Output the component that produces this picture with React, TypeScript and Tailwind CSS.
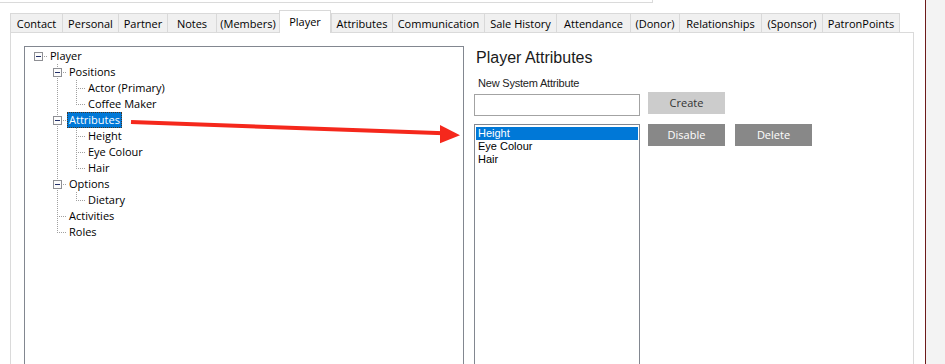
import React from "react";

type Cell = "blank" | "pipe" | "tee" | "elbow" | "root";

type Row = {
  cells: Cell[];
  label: string;
  expander?: boolean;
  selected?: boolean;
};

const tabs = [
  { label: "Contact", w: "w-[52px]" },
  { label: "Personal", w: "w-[56px]" },
  { label: "Partner", w: "w-[49px]" },
  { label: "Notes", w: "w-[49px]" },
  { label: "(Members)", w: "w-[63px]" },
  { label: "Player", w: "w-[52px]", active: true },
  { label: "Attributes", w: "w-[61px]" },
  { label: "Communication", w: "w-[92px]" },
  { label: "Sale History", w: "w-[72px]" },
  { label: "Attendance", w: "w-[74px]" },
  { label: "(Donor)", w: "w-[49px]" },
  { label: "Relationships", w: "w-[82px]" },
  { label: "(Sponsor)", w: "w-[61px]" },
  { label: "PatronPoints", w: "w-[78px]", last: true },
];

const rows: Row[] = [
  { cells: ["root"], label: "Player", expander: true },
  { cells: ["blank", "tee"], label: "Positions", expander: true },
  { cells: ["blank", "pipe", "tee"], label: "Actor (Primary)" },
  { cells: ["blank", "pipe", "elbow"], label: "Coffee Maker" },
  { cells: ["blank", "tee"], label: "Attributes", expander: true, selected: true },
  { cells: ["blank", "pipe", "tee"], label: "Height" },
  { cells: ["blank", "pipe", "tee"], label: "Eye Colour" },
  { cells: ["blank", "pipe", "elbow"], label: "Hair" },
  { cells: ["blank", "tee"], label: "Options", expander: true },
  { cells: ["blank", "pipe", "elbow"], label: "Dietary" },
  { cells: ["blank", "tee"], label: "Activities" },
  { cells: ["blank", "elbow"], label: "Roles" },
];

// one 19x16 slot of the tree's dotted connector lines
function TreeCell({ kind, expander }: { kind: Cell; expander?: boolean }) {
  const dots = { stroke: "#a0a0a0", strokeWidth: 1, strokeDasharray: "1 1" };
  return (
    <svg width="19" height="16" viewBox="0 0 19 16" className="shrink-0" shapeRendering="crispEdges" aria-hidden>
      {(kind === "pipe" || kind === "tee") && <line x1="9.5" y1="0" x2="9.5" y2="16" {...dots} />}
      {kind === "elbow" && <line x1="9.5" y1="0" x2="9.5" y2="8" {...dots} />}
      {(kind === "tee" || kind === "elbow" || kind === "root") && (
        <line x1="9" y1="8.5" x2="19" y2="8.5" {...dots} />
      )}
      {expander && (
        <>
          <rect x="5.5" y="4.5" width="8" height="8" fill="#fcfcfc" stroke="#8e8f94" />
          <line x1="7" y1="8.5" x2="12" y2="8.5" stroke="#23306a" />
        </>
      )}
    </svg>
  );
}

export default function App() {
  return (
    <div className="relative flex h-[364px] w-[945px] overflow-hidden bg-white font-['Open_Sans',sans-serif] text-[11px] text-black">
      <div className="flex w-[925px] shrink-0 flex-col">
        <div className="h-[3px] w-[653px] shrink-0 border-b border-r border-[#dadada]" />

        <div className="ml-[10px] mt-[7px] flex h-[22px] shrink-0 items-end">
          {tabs.map((t) =>
            t.active ? (
              <div
                key={t.label}
                className={`relative z-10 -mb-px flex h-[23px] items-start justify-center border-x border-t border-[#d9d9d9] bg-white pt-[3px] leading-[15px] ${t.w}`}
              >
                {t.label}
              </div>
            ) : (
              <div
                key={t.label}
                className={`flex h-[19px] items-center justify-center border-l border-t border-[#d9d9d9] bg-[#f0f0f0] pt-px leading-[15px] ${t.w} ${
                  t.last ? "border-r" : ""
                }`}
              >
                {t.label}
              </div>
            )
          )}
        </div>

        <div className="ml-[10px] flex min-h-0 w-[904px] flex-1 gap-[10px] overflow-hidden border-x border-t border-[#dadada] pl-[13px] pt-[13px]">
          <div className="h-[400px] w-[440px] shrink-0 border border-[#828790] pl-[4px] pt-px">
            {rows.map((r) => (
              <div key={r.label} className="flex h-[16px] items-center">
                {r.cells.map((c, i) => (
                  <TreeCell key={i} kind={c} expander={r.expander && i === r.cells.length - 1} />
                ))}
                <span
                  className={`h-[16px] border px-px leading-[14px] whitespace-nowrap ${
                    r.selected
                      ? "border-dotted border-[#4a3520] bg-[#0078d7] text-white"
                      : "border-transparent"
                  }`}
                >
                  {r.label}
                </span>
              </div>
            ))}
          </div>

          <div className="flex flex-col font-['Liberation_Sans',Arial,sans-serif]">
            <div className="ml-[2px] mt-[3px] text-[16px] leading-[18px] text-[#1a1a1a]">Player Attributes</div>
            <div className="ml-[4px] mt-[10px] text-[11px] leading-[13px] tracking-[-0.2px] text-[#222]">
              New System Attribute
            </div>

            <div className="mt-[2px] flex items-start gap-[8px]">
              <div className="mt-[2px] h-[22px] w-[166px] border border-[#a3a3a3] bg-white" />
              <button className="h-[22px] w-[77px] bg-[#cccccc] font-['Open_Sans',sans-serif] text-[11px] text-[#333]">
                Create
              </button>
            </div>

            <div className="mt-[8px] flex items-start">
              <div className="h-[300px] w-[166px] border border-[#828790] px-px pt-[2px] text-[11px] leading-[13px]">
                <div className="h-[13px] bg-[#0078d7] pl-[2px] text-white">Height</div>
                <div className="h-[13px] pl-[2px]">Eye Colour</div>
                <div className="h-[13px] pl-[2px]">Hair</div>
              </div>
              <button className="ml-[8px] h-[22px] w-[77px] bg-[#888888] font-['Open_Sans',sans-serif] text-[11px] text-white">
                Disable
              </button>
              <button className="ml-[10px] h-[22px] w-[77px] bg-[#888888] font-['Open_Sans',sans-serif] text-[11px] text-white">
                Delete
              </button>
            </div>
          </div>
        </div>
      </div>

      <div className="w-px shrink-0 bg-[#6d1a1a]" />
      <div className="flex-1 bg-[#f3f3f3]" />

      {/* red annotation arrow drawn over the form */}
      <svg className="pointer-events-none absolute inset-0" width="945" height="364" aria-hidden>
        <line x1="131" y1="122" x2="444" y2="133.2" stroke="#f5281c" strokeWidth="4" />
        <polygon points="440,125 460,135.3 440,143.3" fill="#f5281c" />
      </svg>
    </div>
  );
}
